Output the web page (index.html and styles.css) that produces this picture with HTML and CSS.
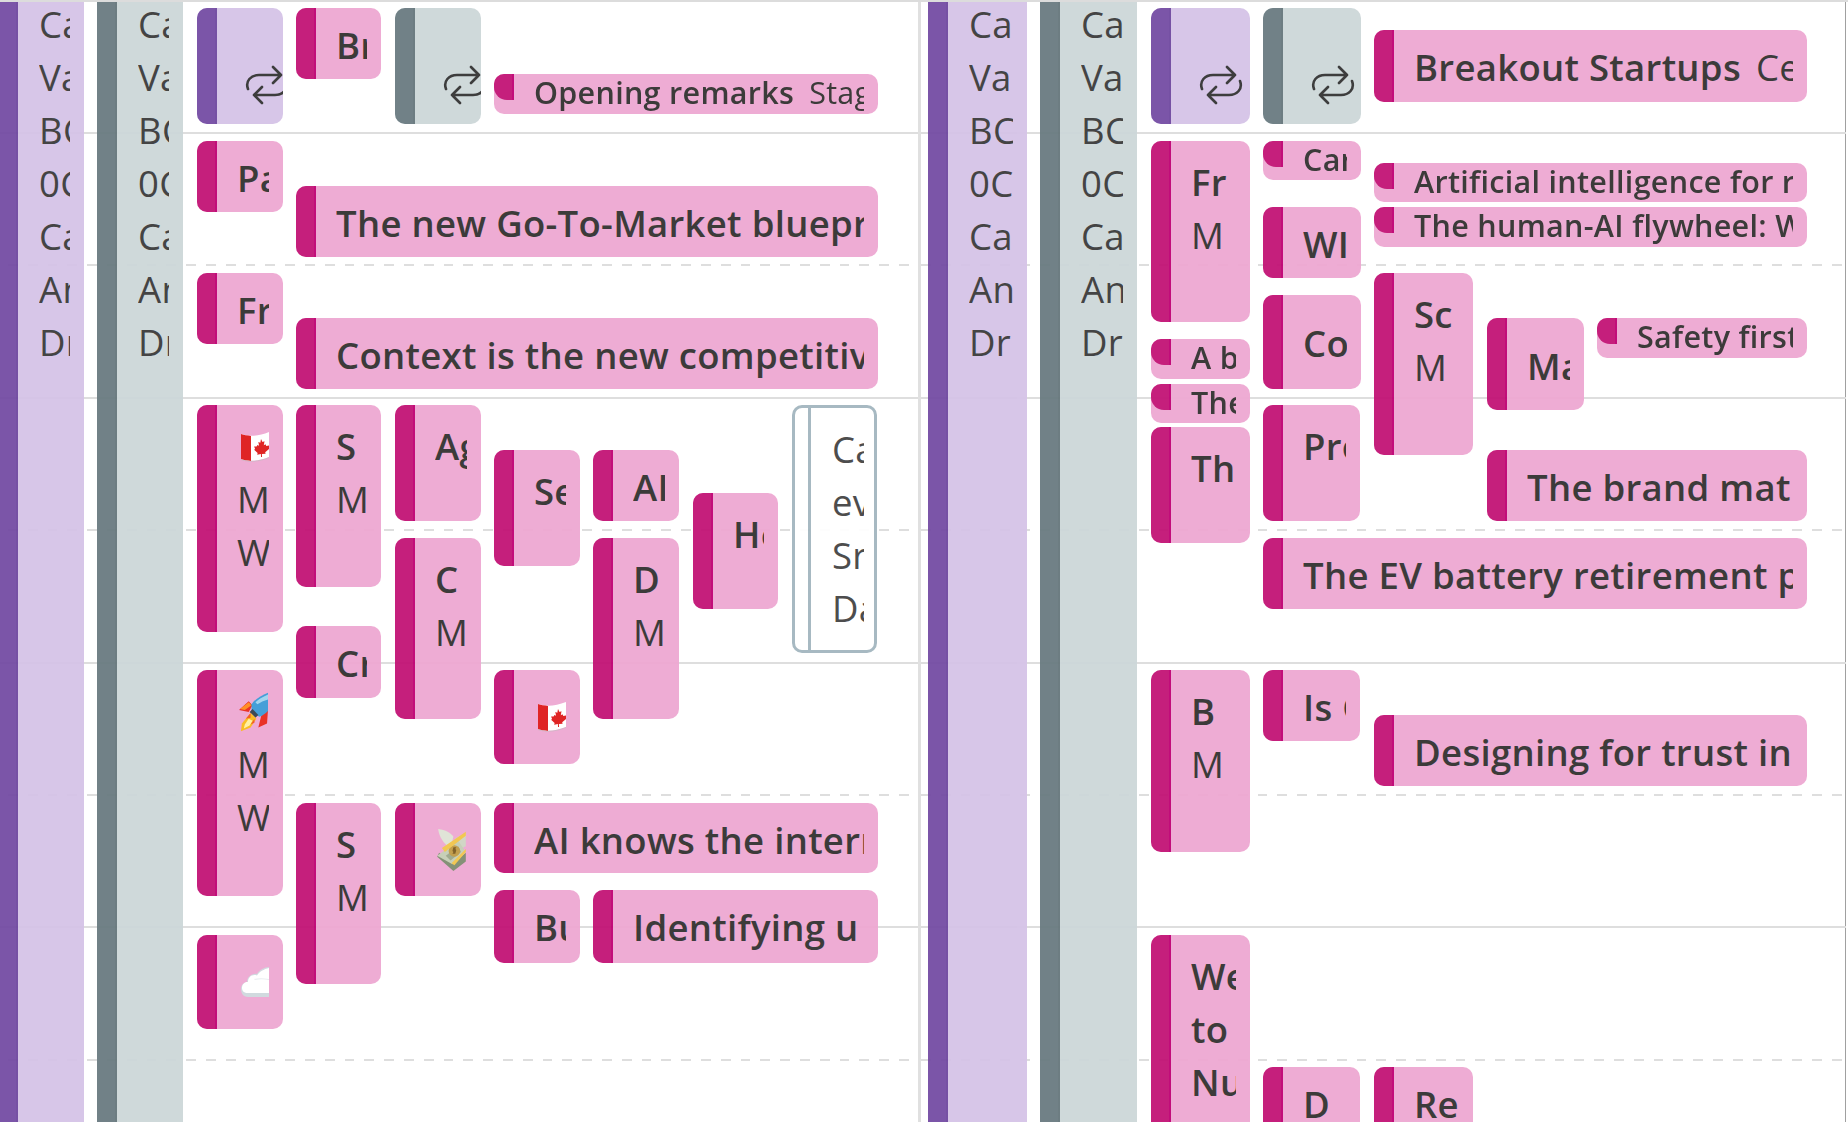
FILE: index.html
```html
<!DOCTYPE html>
<html lang="en">
<head>
<meta charset="utf-8">
<title>Conference calendar</title>
<link rel="stylesheet" href="styles.css">
</head>
<body>
<svg class="defs" width="0" height="0" aria-hidden="true">
  <defs>
    <symbol id="repeat" viewBox="0 0 44 40">
      <g fill="none" stroke="#333" stroke-width="2.6" stroke-linecap="round" stroke-linejoin="round">
        <path d="M3 24C0 16 6 10 14 10H36M28 2l8 8-8 8"/>
        <path d="M41 16C44 24 38 30 30 30H9M17 22l-8 8 8 8"/>
      </g>
    </symbol>
    <symbol id="flag" viewBox="0 0 28 30">
      <path fill="#fff" d="M0 2C8 5 18 4 28 0V25C18 29 8 30 0 27Z"/>
      <path fill="#de1a1a" d="M0 2C3 3 6 3.600 10 3.900V28.900C6 28.600 3 28 0 27Z"/>
      <path fill="#de1a1a" d="M20 7l1.500 3 2-.8-.7 4 1.700-1 .8 1.800 2.700-.4V17l-3.800 3.200.4 1.600-3.700.3.100 3h-1l-.1-3-3.700.6.400-1.700-3.500-3.200 1-.8-1-2.500 2.500.1.800-1.700 1.700.8-.8-3.800 2 .8z"/>
      <path fill="#b9b9b9" opacity=".5" d="M0 27C8 30 18 29 28 25V26C18 30 8 31 0 28Z"/>
    </symbol>
    <symbol id="rocket" viewBox="0 0 30 40">
      <path fill="#e8281c" d="M10 9 0 18l10 2 4-7zM23 24l-3 12 9-4 1-14z"/>
      <path fill="#ff8a1a" d="M1 17 10 10l3 3-7 5z"/>
      <path fill="#3b9ad6" d="M13 12C17 6 23 3 30 0v19c-3 3-6 5-9 6l-8-5z"/>
      <path fill="#9fd3ee" d="M17 10c3-3 7-5 13-8v5c-4 1-8 3-11 5z"/>
      <path fill="#33414a" d="M11 20l3-3 6 6-3 3z"/>
      <path fill="#f9b91a" d="M12 21 3 32l-1 8 10-4 6-9z"/>
      <path fill="#fff0a0" d="M10 27 6 33l-1 4 6-3 3-5z"/>
      <path fill="#f2561d" d="M12 21 7 27l5-1zM16 27l-4 6 4-2z"/>
    </symbol>
    <symbol id="money" viewBox="0 0 30 44">
      <path fill="#dfe3d5" d="M1 0C9 1 14 4 17 8L14 20C7 16 2 8 1 0Z"/>
      <path fill="#cfd4c3" d="M19 10c3-2 7-4 11-5v13l-8 4z"/>
      <path fill="#7f8c70" d="M0 29 17 44l13-10V25L16 36 2 25z"/>
      <path fill="#c5cdb5" d="M0 28 22 12l8 12L16 37z"/>
      <path fill="#9ba78a" d="M9 28 22 18l3 6-11 9z"/>
      <circle cx="18" cy="23" r="6" fill="#c09a45"/>
      <path fill="#f2c54a" d="M5 20 30 3v4L8 24zM15 36 30 21v3L18 38z"/>
      <path fill="#7b5a1e" d="M17 19h3l-1 2 1 1-1 4h-3l1-2-1-1z"/>
    </symbol>
    <symbol id="cloud" viewBox="0 0 28 30">
      <path fill="#cfd8de" d="M0 22C0 18 3 15 6 15 6 10 11 6 16 7 18 3 24 0 28 0V30H7C3 30 0 27 0 22Z"/>
      <path fill="#fff" d="M1 21C1 17 4 14.500 7 15 7 10 11 7 16 8.500 18 5 23 2 28 1V26H7C3 26 1 24 1 21Z"/>
      <path fill="#e9edf0" d="M13 12c4-1 9-1 15 0v1c-5-1-10-1-14 0z"/>
    </symbol>
  </defs>
</svg>

<main class="calendar">
  <section class="day day--first">
    <div class="slots">
      <div class="slot slot--first"></div><div class="slot slot--half"></div><div class="slot"></div><div class="slot slot--half"></div><div class="slot"></div><div class="slot slot--half"></div><div class="slot"></div><div class="slot slot--half"></div><div class="slot"></div>
    </div>

    <article class="event purple bg" style="left:-2px;top:0;width:86px;height:1130px"><span class="bar"></span><div class="body top-bg"><div class="line">Ca</div><div class="line">Va</div><div class="line">BC</div><div class="line">0C</div><div class="line">Ca</div><div class="line">An</div><div class="line">Dri</div></div></article>
    <article class="event slate bg" style="left:97px;top:0;width:86px;height:1130px"><span class="bar"></span><div class="body top-bg"><div class="line">Ca</div><div class="line">Va</div><div class="line">BC</div><div class="line">0C</div><div class="line">Ca</div><div class="line">An</div><div class="line">Dri</div></div></article>

    <article class="event purple" style="left:197px;top:6px;width:86px;height:116px"><span class="bar"></span><svg class="repeat"><use href="#repeat"/></svg></article>
    <article class="event pink" style="left:296px;top:6px;width:85px;height:71px"><span class="bar"></span><div class="body top-s"><div class="line title">Br</div></div></article>
    <article class="event slate" style="left:395px;top:6px;width:86px;height:116px"><span class="bar"></span><svg class="repeat"><use href="#repeat"/></svg></article>
    <article class="event pink short" style="left:494px;top:72px;width:384px;height:40px"><span class="bar"></span><div class="body top-xs"><div class="line title">Opening remarks<span class="loc">Stage 1</span></div></div></article>

    <article class="event pink" style="left:197px;top:139px;width:86px;height:71px"><span class="bar"></span><div class="body top-s"><div class="line title">Pa</div></div></article>
    <article class="event pink" style="left:296px;top:184px;width:582px;height:71px"><span class="bar"></span><div class="body top-s"><div class="line title">The new Go-To-Market blueprint</div></div></article>
    <article class="event pink" style="left:197px;top:271px;width:86px;height:71px"><span class="bar"></span><div class="body top-s"><div class="line title">Fr</div></div></article>
    <article class="event pink" style="left:296px;top:316px;width:582px;height:71px"><span class="bar"></span><div class="body top-s"><div class="line title">Context is the new competitive</div></div></article>

    <article class="event pink" style="left:197px;top:403px;width:86px;height:227px"><span class="bar"></span><div class="body top-l"><div class="line"><svg class="emoji"><use href="#flag"/></svg></div><div class="line">M</div><div class="line">W</div></div></article>
    <article class="event pink" style="left:296px;top:403px;width:85px;height:182px"><span class="bar"></span><div class="body top-l"><div class="line title">S</div><div class="line">M</div></div></article>
    <article class="event pink" style="left:395px;top:403px;width:86px;height:116px"><span class="bar"></span><div class="body top-l"><div class="line title">Ag</div></div></article>
    <article class="event pink" style="left:494px;top:448px;width:86px;height:116px"><span class="bar"></span><div class="body top-l"><div class="line title">Se</div></div></article>
    <article class="event pink" style="left:593px;top:448px;width:86px;height:71px"><span class="bar"></span><div class="body top-s"><div class="line title">AI</div></div></article>
    <article class="event pink" style="left:693px;top:491px;width:85px;height:116px"><span class="bar"></span><div class="body top-l"><div class="line title">He</div></div></article>
    <article class="event outline" style="left:792px;top:403px;width:85px;height:248px"><span class="bar"></span><div class="body top-l"><div class="line">Ca</div><div class="line">ev</div><div class="line">Sr</div><div class="line">Da</div></div></article>
    <article class="event pink" style="left:395px;top:536px;width:86px;height:181px"><span class="bar"></span><div class="body top-l"><div class="line title">C</div><div class="line">M</div></div></article>
    <article class="event pink" style="left:593px;top:536px;width:86px;height:181px"><span class="bar"></span><div class="body top-l"><div class="line title">D</div><div class="line">M</div></div></article>
    <article class="event pink" style="left:296px;top:624px;width:85px;height:72px"><span class="bar"></span><div class="body top-s"><div class="line title">Cr</div></div></article>

    <article class="event pink" style="left:197px;top:668px;width:86px;height:226px"><span class="bar"></span><div class="body top-l"><div class="line"><svg class="emoji emoji--tall"><use href="#rocket"/></svg></div><div class="line">M</div><div class="line">W</div></div></article>
    <article class="event pink" style="left:494px;top:668px;width:86px;height:94px"><span class="bar"></span><div class="body top-e"><div class="line"><svg class="emoji"><use href="#flag"/></svg></div></div></article>
    <article class="event pink" style="left:296px;top:801px;width:85px;height:181px"><span class="bar"></span><div class="body top-l"><div class="line title">S</div><div class="line">M</div></div></article>
    <article class="event pink" style="left:395px;top:801px;width:86px;height:93px"><span class="bar"></span><div class="body top-e"><div class="line"><svg class="emoji emoji--tall"><use href="#money"/></svg></div></div></article>
    <article class="event pink" style="left:494px;top:801px;width:384px;height:70px"><span class="bar"></span><div class="body top-s"><div class="line title">AI knows the internet</div></div></article>
    <article class="event pink" style="left:494px;top:888px;width:86px;height:73px"><span class="bar"></span><div class="body top-s"><div class="line title">Bu</div></div></article>
    <article class="event pink" style="left:593px;top:888px;width:285px;height:73px"><span class="bar"></span><div class="body top-s"><div class="line title">Identifying u</div></div></article>
    <article class="event pink" style="left:197px;top:933px;width:86px;height:94px"><span class="bar"></span><div class="body top-e"><div class="line"><svg class="emoji"><use href="#cloud"/></svg></div></div></article>
  </section>

  <section class="day day--second">
    <div class="slots">
      <div class="slot slot--first"></div><div class="slot slot--half"></div><div class="slot"></div><div class="slot slot--half"></div><div class="slot"></div><div class="slot slot--half"></div><div class="slot"></div><div class="slot slot--half"></div><div class="slot"></div>
    </div>

    <article class="event purple bg" style="left:7px;top:0;width:99px;height:1130px"><span class="bar"></span><div class="body top-bg"><div class="line">Ca</div><div class="line">Van</div><div class="line">BC</div><div class="line">0C</div><div class="line">Ca</div><div class="line">An</div><div class="line">Dri</div></div></article>
    <article class="event slate bg" style="left:119px;top:0;width:97px;height:1130px"><span class="bar"></span><div class="body top-bg"><div class="line">Ca</div><div class="line">Van</div><div class="line">BC</div><div class="line">0C</div><div class="line">Ca</div><div class="line">An</div><div class="line">Dri</div></div></article>

    <article class="event purple" style="left:230px;top:6px;width:99px;height:116px"><span class="bar"></span><svg class="repeat"><use href="#repeat"/></svg></article>
    <article class="event slate" style="left:342px;top:6px;width:98px;height:116px"><span class="bar"></span><svg class="repeat"><use href="#repeat"/></svg></article>
    <article class="event pink" style="left:453px;top:28px;width:433px;height:72px"><span class="bar"></span><div class="body top-s"><div class="line title">Breakout Startups<span class="loc">Center</span></div></div></article>

    <article class="event pink" style="left:230px;top:139px;width:99px;height:181px"><span class="bar"></span><div class="body top-l"><div class="line title">Fr</div><div class="line">M</div></div></article>
    <article class="event pink short" style="left:342px;top:139px;width:98px;height:39px"><span class="bar"></span><div class="body top-xs"><div class="line title">Careers</div></div></article>
    <article class="event pink short" style="left:453px;top:161px;width:433px;height:39px"><span class="bar"></span><div class="body top-xs"><div class="line title">Artificial intelligence for retail</div></div></article>
    <article class="event pink short" style="left:453px;top:205px;width:433px;height:40px"><span class="bar"></span><div class="body top-xs"><div class="line title">The human-AI flywheel: Why</div></div></article>
    <article class="event pink" style="left:342px;top:205px;width:98px;height:71px"><span class="bar"></span><div class="body top-s"><div class="line title">WI</div></div></article>
    <article class="event pink" style="left:453px;top:271px;width:99px;height:182px"><span class="bar"></span><div class="body top-l"><div class="line title">Sc</div><div class="line">M</div></div></article>
    <article class="event pink" style="left:342px;top:293px;width:98px;height:94px"><span class="bar"></span><div class="body top-m"><div class="line title">Co</div></div></article>
    <article class="event pink" style="left:566px;top:316px;width:97px;height:92px"><span class="bar"></span><div class="body top-m"><div class="line title">Ma</div></div></article>
    <article class="event pink short" style="left:676px;top:316px;width:210px;height:40px"><span class="bar"></span><div class="body top-xs"><div class="line title">Safety first</div></div></article>
    <article class="event pink short" style="left:230px;top:337px;width:99px;height:40px"><span class="bar"></span><div class="body top-xs"><div class="line title">A b</div></div></article>
    <article class="event pink short" style="left:230px;top:382px;width:99px;height:39px"><span class="bar"></span><div class="body top-xs"><div class="line title">The</div></div></article>
    <article class="event pink" style="left:342px;top:403px;width:97px;height:116px"><span class="bar"></span><div class="body top-l"><div class="line title">Pro</div></div></article>
    <article class="event pink" style="left:230px;top:425px;width:99px;height:116px"><span class="bar"></span><div class="body top-l"><div class="line title">Th</div></div></article>
    <article class="event pink" style="left:566px;top:448px;width:320px;height:71px"><span class="bar"></span><div class="body top-s"><div class="line title">The brand matrix</div></div></article>
    <article class="event pink" style="left:342px;top:536px;width:544px;height:71px"><span class="bar"></span><div class="body top-s"><div class="line title">The EV battery retirement plan</div></div></article>

    <article class="event pink" style="left:230px;top:668px;width:99px;height:182px"><span class="bar"></span><div class="body top-l"><div class="line title">B</div><div class="line">M</div></div></article>
    <article class="event pink" style="left:342px;top:668px;width:97px;height:71px"><span class="bar"></span><div class="body top-s"><div class="line title">Is Canada</div></div></article>
    <article class="event pink" style="left:453px;top:713px;width:433px;height:71px"><span class="bar"></span><div class="body top-s"><div class="line title">Designing for trust in AI</div></div></article>
    <article class="event pink" style="left:230px;top:933px;width:99px;height:240px"><span class="bar"></span><div class="body top-l"><div class="line title">We</div><div class="line title">to</div><div class="line title">Nu</div><div class="line">M</div></div></article>
    <article class="event pink" style="left:342px;top:1065px;width:97px;height:94px"><span class="bar"></span><div class="body top-s"><div class="line title">D</div></div></article>
    <article class="event pink" style="left:453px;top:1065px;width:99px;height:94px"><span class="bar"></span><div class="body top-s"><div class="line title">Re</div></div></article>
  </section>
</main>
</body>
</html>
```

FILE: styles.css
```css
* { box-sizing: border-box; }

html, body {
  margin: 0;
  height: 100%;
  overflow: hidden;
  background: #fff;
}

.defs { position: absolute; }

.calendar {
  display: flex;
  height: 1122px;
  overflow: hidden;
  border-top: 2px solid #dcdcdc;
  font-family: "Open Sans", "Noto Sans", sans-serif;
  font-size: 36.5px;
  letter-spacing: .3px;
  line-height: 53px;
  color: #323130;
  filter: blur(.5px);
}

.day {
  position: relative;
  overflow: hidden;
}

.day--first {
  flex: 0 0 921px;
  border-right: 3px solid #e0e0e0;
  --dash-start: 8px;
}

.day--second {
  flex: 1;
  border-right: 2px solid #fff;
  box-shadow: inset -1px 0 0 #a0a0a0;
  --dash-start: 0px;
}

.slot {
  height: 132.4px;
  border-bottom: 2px solid #dedede;
}

.slot--first { height: 132px; }

.slot--half {
  border-bottom: 0;
  background-image: repeating-linear-gradient(90deg, #dedede 0 9.9px, transparent 9.9px 19.8px);
  background-size: 100% 2px;
  background-position: var(--dash-start) 100%;
  background-repeat: no-repeat;
}

.event {
  position: absolute;
  display: flex;
  overflow: hidden;
  border-radius: 10px;
  opacity: .95;
  background: #eea8d2;
  --bar: #c21375;
  --bar-edge: #bf0073;
}

.event.purple { background: #d5c3e7; --bar: #744ca4; --bar-edge: #6f48a0; }
.event.slate { background: #cdd7d9; --bar: #6a7b81; --bar-edge: #66777c; }

.event.outline {
  background: #fff;
  border: 3px solid #a3b6bf;
  --bar: transparent;
  --bar-edge: #a3b6bf;
  color: #444;
}

.bar {
  flex: none;
  align-self: stretch;
  width: 20px;
  background: var(--bar);
  border-right: 2px solid var(--bar-edge);
}

.event.outline .bar { width: 16px; border-right-width: 3px; }
.event.outline .body { padding-left: 21px; padding-right: 10px; }

.short { font-size: 30.5px; }

.short .bar {
  align-self: flex-start;
  height: 26px;
  border-bottom-left-radius: 13px;
}

.event.bg { border-radius: 0; color: #3a3a3a; }

.body {
  flex: 1;
  min-width: 0;
  padding: 0 14px 0 20px;
}

.top-bg { margin-top: -4px; padding-left: 21px; }
.top-xs { margin-top: -8px; }
.top-s { padding-top: 11px; }
.top-e { padding-top: 20px; }
.top-m { padding-top: 22px; }
.top-l { padding-top: 15px; }

.line {
  display: flex;
  align-items: center;
  height: 53px;
  overflow: hidden;
  white-space: nowrap;
}

.title { font-weight: 600; }

.loc {
  margin-left: 15px;
  font-weight: 400;
}

.repeat {
  position: absolute;
  left: 48px;
  top: 57px;
  width: 44px;
  height: 40px;
  overflow: visible;
}

.emoji {
  flex: none;
  width: 28px;
  height: 30px;
  margin-left: 4px;
}

.emoji--tall {
  width: 29px;
  height: 42px;
  margin-left: 2px;
}
```
